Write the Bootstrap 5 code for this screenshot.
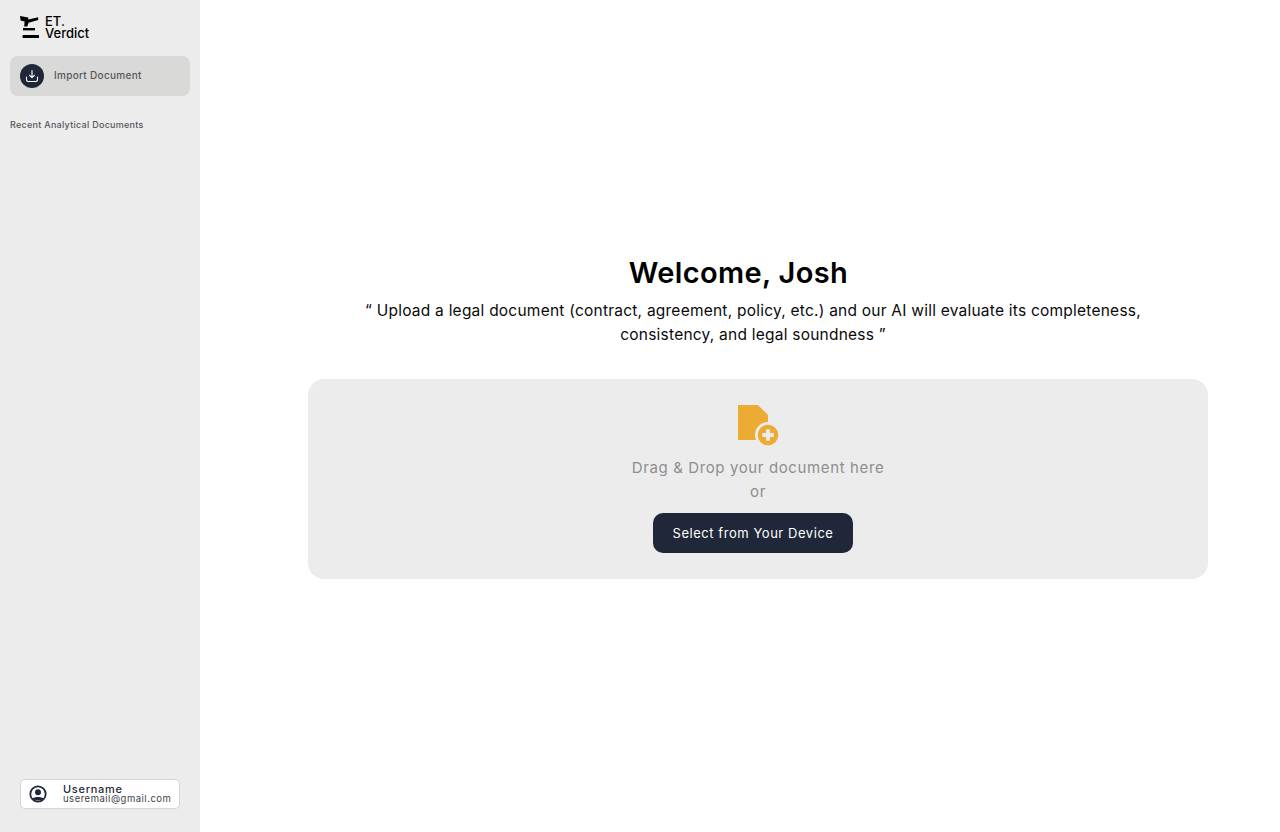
<!DOCTYPE html>
<html lang="en">
<head>
<meta charset="utf-8">
<title>ET. Verdict</title>
<link href="https://cdn.jsdelivr.net/npm/bootstrap@5.3.0/dist/css/bootstrap.min.css" rel="stylesheet">
<style>
html,body{height:100%}
body{font-family:Inter,"Liberation Sans",sans-serif;background:#fff;color:#000}
.app-shell{height:832px;overflow:hidden}
.side-rail{width:200px;background:#ececec;padding:13px 10px 23px}
.brand-row{padding-left:9px;height:28px;margin-bottom:15px;gap:5px}
.brand-name{font-size:13px;line-height:12px;font-weight:500;color:#000;letter-spacing:0}
.import-tile{height:40px;background:#d9d9d7;border-radius:8px;padding:0 10px 1px;gap:10px;color:#55565a;font-size:10px;font-weight:500;letter-spacing:.3px}
.import-dot{width:24px;height:24px;border-radius:50%;background:#1f2738}
.recent-label{margin-top:23px;font-size:9px;line-height:12px;font-weight:500;color:#55565a;letter-spacing:.27px}
.user-chip{width:160px;height:30px;margin-left:10px;background:#fff;border:1px solid #d4d4d4;border-radius:5px;padding-left:8px;gap:16px}
.user-name{font-size:11px;line-height:10px;font-weight:500;color:#1f2738;letter-spacing:.7px}
.user-mail{font-size:9.5px;line-height:10px;color:#3c3f46;letter-spacing:.5px}
.work-area{width:1080px;padding-top:255px}
.hello{font-size:29px;line-height:36px;font-weight:600;text-align:center;margin:0 3px 8px 0;letter-spacing:.35px}
.intro{width:800px;margin:0 0 32px 153px;font-size:15.5px;line-height:24px;text-align:center;letter-spacing:.23px;color:#0a0a0a}
.drop-zone{width:900px;height:200px;margin-left:108px;background:#ececec;border-radius:16px;padding-top:26px}
.drop-icon{display:block;margin:0 auto}
.drop-text{width:100%;text-align:center;font-size:15px;line-height:24px;color:#8e8e8e;letter-spacing:.62px}
.drop-first{margin-top:10px}
.pick-btn{display:block;width:200px;height:40px;margin:9px 0 0 345px;padding-top:7px;background:#1f2738;border:0;border-radius:10px;color:#fff;font-size:13px;letter-spacing:.55px;font-weight:400}
.pick-btn:hover{background:#1f2738;color:#fff}
</style>
</head>
<body>
<div class="app-shell d-flex">
  <aside class="side-rail d-flex flex-column">
    <div class="brand-row d-flex align-items-center">
      <svg width="21" height="24" viewBox="0 0 21 24" aria-hidden="true">
        <path d="M1 1 L9.2 2.4 L9.4 4.6 L19.2 2.2 L19.2 5 L9.6 7.8 L8.2 11.5 L5.2 11.5 L5.6 6.4 L1.6 5.4 Z" fill="#000"/>
        <rect x="4" y="13" width="12" height="2.4" fill="#000"/>
        <rect x="3.6" y="20" width="16.4" height="3" fill="#000"/>
      </svg>
      <div class="brand-name">ET.<br>Verdict</div>
    </div>
    <div class="import-tile d-flex align-items-center">
      <span class="import-dot d-flex align-items-center justify-content-center">
        <svg width="14" height="14" viewBox="0 0 14 14" fill="none" stroke="#fff" stroke-width="1.1" stroke-linecap="round" stroke-linejoin="round" aria-hidden="true">
          <path d="M7 1.5V8.5M4.6 6.3 7 8.6 9.4 6.3"/>
          <path d="M1.5 8V10.8A1.7 1.7 0 0 0 3.2 12.5H10.8A1.7 1.7 0 0 0 12.5 10.8V8"/>
        </svg>
      </span>
      <span>Import Document</span>
    </div>
    <div class="recent-label">Recent Analytical Documents</div>
    <div class="user-chip d-flex align-items-center mt-auto">
      <svg width="18" height="18" viewBox="0 0 18 18" aria-hidden="true">
        <circle cx="9" cy="9" r="7.7" fill="none" stroke="#1f2738" stroke-width="1.8"/>
        <circle cx="9" cy="7.2" r="3" fill="#1f2738"/>
        <path d="M3.4 13.6C5 11.4 13 11.4 14.6 13.6 13 16.2 5 16.2 3.4 13.6Z" fill="#1f2738"/>
      </svg>
      <div>
        <div class="user-name">Username</div>
        <div class="user-mail">useremail@gmail.com</div>
      </div>
    </div>
  </aside>
  <main class="work-area">
    <h1 class="hello">Welcome, Josh</h1>
    <p class="intro">“ Upload a legal document (contract, agreement, policy, etc.) and our AI will evaluate its completeness, consistency, and legal soundness ”</p>
    <section class="drop-zone">
      <svg class="drop-icon" width="41" height="41" viewBox="0 0 41 41" aria-hidden="true">
        <path d="M0 0H20L30 10V35H0Z" fill="#ecab33"/>
        <circle cx="30" cy="30" r="13" fill="#ececec"/>
        <circle cx="30" cy="30" r="10.3" fill="#ecab33"/>
        <path d="M30 24.2V35.8M24.2 30H35.8" stroke="#ececec" stroke-width="3.8"/>
      </svg>
      <div class="drop-text drop-first">Drag &amp; Drop your document here</div>
      <div class="drop-text">or</div>
      <button type="button" class="btn pick-btn">Select from Your Device</button>
    </section>
  </main>
</div>
<script src="https://cdn.jsdelivr.net/npm/bootstrap@5.3.0/dist/js/bootstrap.bundle.min.js"></script>
</body>
</html>
